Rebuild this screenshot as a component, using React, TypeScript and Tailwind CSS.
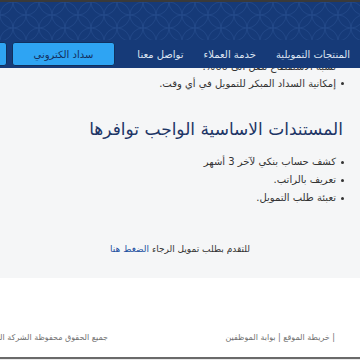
import React from 'react';

const NAV = ['المنتجات التمويلية', 'خدمة العملاء', 'تواصل معنا'];

const TOP_LIST = ['نسبة الاستقطاع تصل الى 60%.', 'إمكانية السداد المبكر للتمويل في أي وقت.'];

const DOCS = ['كشف حساب بنكي لآخر 3 أشهر', 'تعريف بالراتب.', 'تعبئة طلب التمويل.'];

const Bullets: React.FC<{ items: string[]; leading: string }> = ({ items, leading }) => (
  <ul className={`mr-[16px] text-[10px] text-[#333] ${leading}`}>
    {items.map((t) => (
      <li key={t} className="flex items-center gap-[5px]">
        <span className="w-[3px] h-[3px] rounded-full bg-[#333] shrink-0" />
        <span>{t}</span>
      </li>
    ))}
  </ul>
);

// header background ornament
const Pattern = () => (
  <svg className="absolute inset-0 w-full h-full" aria-hidden>
    <defs>
      <pattern id="orn" width="26" height="26" patternUnits="userSpaceOnUse">
        <circle cx="13" cy="13" r="13" fill="none" stroke="#3a63a6" strokeWidth="0.7" />
        <circle cx="0" cy="0" r="13" fill="none" stroke="#3a63a6" strokeWidth="0.7" />
        <circle cx="26" cy="0" r="13" fill="none" stroke="#3a63a6" strokeWidth="0.7" />
        <circle cx="0" cy="26" r="13" fill="none" stroke="#3a63a6" strokeWidth="0.7" />
        <circle cx="26" cy="26" r="13" fill="none" stroke="#3a63a6" strokeWidth="0.7" />
      </pattern>
    </defs>
    <rect width="100%" height="100%" fill="url(#orn)" opacity="0.45" />
  </svg>
);

export default function App() {
  return (
    <div
      dir="rtl"
      className="w-[360px] h-[360px] overflow-hidden bg-white flex flex-col font-['DejaVu_Sans',sans-serif]"
    >
      <div className="h-[2px] bg-[#3a3a3a] shrink-0" />

      <header className="relative z-10 bg-[#163a78] shrink-0">
        <div className="relative h-[38px] overflow-hidden">
          <Pattern />
        </div>
        <div className="h-[28px] flex items-center justify-between">
          <nav className="flex items-center gap-[20px] mr-[10px] text-[10px] text-[#dde5f2] whitespace-nowrap">
            {NAV.map((n) => (
              <a key={n}>{n}</a>
            ))}
          </nav>
          <div className="flex items-center gap-[5px] ml-[-93px]">
            <button className="w-[103px] h-[24px] rounded-[3px] bg-[#2ea4f3] border border-[#10305e] text-[10px] text-[#14305e]">
              سداد الكتروني
            </button>
            <button className="w-[100px] h-[24px] rounded-[3px] bg-[#2ea4f3] border border-[#10305e] text-[10px] text-[#14305e]">
              طلب تمويل
            </button>
          </div>
        </div>
      </header>

      <main className="h-[210px] shrink-0 overflow-hidden bg-[#f5f6f7]">
        <div className="mt-[-10px]">
          <Bullets items={TOP_LIST} leading="leading-[17px]" />
          <h2 className="mt-[23px] mr-[17px] text-[17px] leading-[28px] text-[#1d3566]">
            المستندات الاساسية الواجب توافرها
          </h2>
          <div className="mt-[10px]">
            <Bullets items={DOCS} leading="leading-[18px]" />
          </div>
          <p className="mt-[34px] text-center text-[9px] leading-[17px] text-[#333]">
            للتقدم بطلب تمويل الرجاء <a className="text-[#1b4fa0]">الضغط هنا</a>
          </p>
        </div>
      </main>

      <footer className="h-[79px] shrink-0 bg-white flex items-end pb-[13px] justify-between text-[8px] text-[#6f6f6f] whitespace-nowrap">
        <div className="mr-[25px]">| خريطة الموقع | بوابة الموظفين</div>
        <div className="w-[108px]">جميع الحقوق محفوظة الشركة السعودية للتمويل © 2020</div>
      </footer>
      <div className="h-[2px] bg-[#6a6a6a] shrink-0" />
      <div className="flex-1 bg-[#e9e9e9]" />
    </div>
  );
}
